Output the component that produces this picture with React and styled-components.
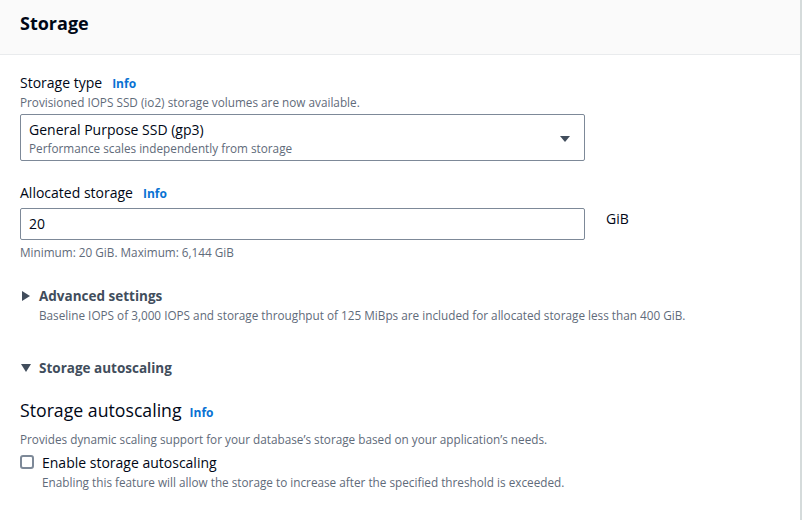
import React from 'react';
import styled, { createGlobalStyle } from 'styled-components';

const GlobalStyle = createGlobalStyle`
  body {
    margin: 0;
    background: #ffffff;
    font-family: "Open Sans", "Noto Sans", sans-serif;
    color: #000716;
  }
`;

const Panel = styled.div`
  width: 800px;
  height: 520px;
  border-right: 2px solid #d5dbdb;
  background: #ffffff;
  box-sizing: content-box;
`;

const Header = styled.div`
  height: 55px;
  background: #fafafa;
  border-bottom: 1px solid #e9ebed;
  padding: 0 20px;
  display: flex;
  align-items: center;
  box-sizing: border-box;
`;

const Title = styled.h2`
  margin: 0 0 9px;
  font-size: 18px;
  font-weight: 700;
  color: #000716;
`;

const Body = styled.div`
  padding: 17px 20px 0;
  display: flex;
  flex-direction: column;
`;

const Field = styled.div`
  margin-bottom: ${p => p.gap || 0}px;
`;

const LabelRow = styled.div`
  display: flex;
  align-items: baseline;
  gap: 10px;
  height: 22px;
  line-height: 22px;
`;

const Label = styled.span`
  font-size: 14px;
  color: #000716;
`;

const Info = styled.span`
  font-size: 12px;
  font-weight: 700;
  color: #0972d3;
`;

const Hint = styled.div`
  font-size: 11.75px;
  line-height: 16px;
  color: #5f6b7a;
  margin-top: ${p => p.top || 0}px;
`;

const Select = styled.div`
  margin-top: 4px;
  width: 565px;
  height: 47px;
  box-sizing: border-box;
  border: 1px solid #7d8998;
  border-radius: 2px;
  padding: 4px 8px;
  display: flex;
  align-items: center;
  justify-content: space-between;
`;

const OptionText = styled.div`
  display: flex;
  flex-direction: column;
`;

const OptionLabel = styled.span`
  font-size: 14px;
  line-height: 20px;
  color: #000716;
`;

const Caret = styled.svg`
  width: 12px;
  height: 12px;
  margin: 2px 5px 0 0;
`;

const InputRow = styled.div`
  display: flex;
  align-items: flex-start;
  gap: 21px;
  margin-top: 4px;
`;

const Input = styled.div`
  width: 565px;
  height: 32px;
  box-sizing: border-box;
  border: 1px solid #7d8998;
  border-radius: 2px;
  padding: 0 8px;
  font-size: 14px;
  line-height: 30px;
`;

const Unit = styled.span`
  font-size: 14px;
  line-height: 22px;
`;

const Expander = styled.div`
  display: flex;
  gap: 8px;
  margin-bottom: ${p => p.gap || 0}px;
`;

const Arrow = styled.svg`
  width: 10px;
  height: 10px;
  margin: 6px 0 0 1px;
  flex-shrink: 0;
`;

const ExpanderTitle = styled.div`
  font-size: 13.5px;
  font-weight: 700;
  line-height: 22px;
  color: #414d5c;
`;

const SubHeading = styled.div`
  display: flex;
  align-items: baseline;
  gap: 8px;
  margin-bottom: 8px;
`;

const SubTitle = styled.span`
  font-size: 17.7px;
  line-height: 26px;
  color: #000716;
`;

const CheckRow = styled.div`
  display: flex;
  gap: 8px;
  margin-top: 5px;
`;

const Box = styled.div`
  width: 14px;
  height: 14px;
  box-sizing: border-box;
  border: 2px solid #7d8998;
  border-radius: 3px;
  margin-top: 3px;
`;

const CheckLabel = styled.div`
  font-size: 14px;
  line-height: 22px;
  color: #000716;
`;

export default function App() {
  return (
    <>
      <GlobalStyle />
      <Panel>
        <Header>
          <Title>Storage</Title>
        </Header>
        <Body>
          <Field gap={21}>
            <LabelRow>
              <Label>Storage type</Label>
              <Info>Info</Info>
            </LabelRow>
            <Hint>Provisioned IOPS SSD (io2) storage volumes are now available.</Hint>
            <Select>
              <OptionText>
                <OptionLabel>General Purpose SSD (gp3)</OptionLabel>
                <Hint>Performance scales independently from storage</Hint>
              </OptionText>
              <Caret viewBox="0 0 12 12">
                <path d="M1 3h10L6 9z" fill="#414d5c" />
              </Caret>
            </Select>
          </Field>
          <Field gap={25}>
            <LabelRow>
              <Label>Allocated storage</Label>
              <Info>Info</Info>
            </LabelRow>
            <InputRow>
              <Input>20</Input>
              <Unit>GiB</Unit>
            </InputRow>
            <Hint top={4}>Minimum: 20 GiB. Maximum: 6,144 GiB</Hint>
          </Field>
          <Expander gap={34}>
            <Arrow viewBox="0 0 10 10">
              <path d="M1 0l8 5-8 5z" fill="#414d5c" />
            </Arrow>
            <div>
              <ExpanderTitle>Advanced settings</ExpanderTitle>
              <Hint>Baseline IOPS of 3,000 IOPS and storage throughput of 125 MiBps are included for allocated storage less than 400 GiB.</Hint>
            </div>
          </Expander>
          <Expander gap={18}>
            <Arrow viewBox="0 0 10 10">
              <path d="M0 1h10L5 9z" fill="#414d5c" />
            </Arrow>
            <ExpanderTitle>Storage autoscaling</ExpanderTitle>
          </Expander>
          <SubHeading>
            <SubTitle>Storage autoscaling</SubTitle>
            <Info>Info</Info>
          </SubHeading>
          <Hint>Provides dynamic scaling support for your database’s storage based on your application’s needs.</Hint>
          <CheckRow>
            <Box />
            <div>
              <CheckLabel>Enable storage autoscaling</CheckLabel>
              <Hint>Enabling this feature will allow the storage to increase after the specified threshold is exceeded.</Hint>
            </div>
          </CheckRow>
        </Body>
      </Panel>
    </>
  );
}
